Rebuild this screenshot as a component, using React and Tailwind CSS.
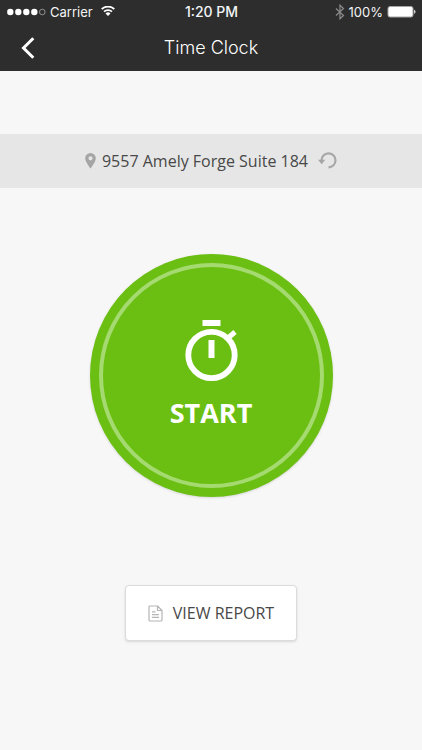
import React from 'react';

function StatusBar() {
  return (
    <div className="grid h-6 grid-cols-[1fr_auto_1fr] items-center pl-[7px] pr-[6px] text-[13px] leading-6 text-gray-100">
      <div className="flex items-center">
        <svg width="39" height="8" viewBox="0 0 39 8" aria-hidden="true">
          <g fill="#fff">
            <circle cx="3.300" cy="4" r="3.200" />
            <circle cx="11.300" cy="4" r="3.200" />
            <circle cx="19.300" cy="4" r="3.200" />
            <circle cx="27.300" cy="4" r="3.200" />
          </g>
          <circle cx="35.300" cy="4" r="2.800" fill="none" stroke="#aaa" strokeWidth="0.8" />
        </svg>
        <span className="ml-1">Carrier</span>
        <svg className="ml-2 shrink-0" width="14" height="12" viewBox="0 0 14 12" fill="none" stroke="#fff" strokeWidth="1.700" aria-hidden="true">
          <path d="M0.7 3.100a9 9 0 0 1 12.600 0M3 5.700a5.800 5.800 0 0 1 8 0" />
          <path d="M7 10 4.500 7.500a3.500 3.500 0 0 1 5 0z" fill="#fff" stroke="none" />
        </svg>
      </div>
      <div className="text-center text-sm font-medium leading-6">1:20 PM</div>
      <div className="flex items-center justify-end">
        <svg width="10" height="16" viewBox="0 0 10 16" fill="none" stroke="#8c8c8c" strokeWidth="1.200" aria-hidden="true">
          <path d="M1 4.500 8.500 11.500 5 14.800V1.200L8.500 4.500 1 11.500" />
        </svg>
        <span className="ml-1">100%</span>
        <svg className="ml-1" width="29" height="12" viewBox="0 0 29 12" aria-hidden="true">
          <rect x="1" y="0.5" width="25" height="10.500" rx="2" fill="#fff" stroke="#a5a5a5" />
          <path d="M27 3.800c2 .4 2 3.600 0 4z" fill="#ccc" />
        </svg>
      </div>
    </div>
  );
}

function Header() {
  return (
    <header className="bg-[#2d2d2d] font-['Inter','Liberation_Sans',sans-serif]">
      <StatusBar />
      <div className="grid h-[47px] grid-cols-[56px_1fr_56px] items-center">
        <button type="button" aria-label="Back" className="flex h-full items-center justify-center">
          <svg width="14" height="22" viewBox="0 0 14 22" fill="none" stroke="#fff" strokeWidth="3" aria-hidden="true">
            <path d="M12.300 1.200 2.500 11l9.800 9.800" />
          </svg>
        </button>
        <h1 className="text-center text-lg font-light text-white">Time Clock</h1>
      </div>
    </header>
  );
}

function LocationBar() {
  return (
    <div className="mt-[63px] flex h-[54px] items-center justify-center bg-[#e6e6e6]">
      <svg width="11" height="16" viewBox="0 0 11 16" fill="#a5a5a5" aria-hidden="true">
        <path fillRule="evenodd" d="M5.500 0A5.300 5.300 0 0 0 0.200 5.300C0.200 9 5.500 15.500 5.500 15.500S10.800 9 10.800 5.300A5.300 5.300 0 0 0 5.500 0zm0 3.300a2 2 0 1 1 0 4.100 2 2 0 0 1 0-4.100z" />
      </svg>
      <span className="ml-[6px] text-base">9557 Amely Forge Suite 184</span>
      <button type="button" aria-label="Refresh location" className="ml-[10px]">
        <svg width="19" height="18" viewBox="0 0 19 18" aria-hidden="true">
          <path d="M3.500 8.500A7 7 0 1 1 10.500 15.300" fill="none" stroke="#a8a8a8" strokeWidth="2.200" />
          <path d="M0 7.800h7.200L3.700 12.300z" fill="#a5a5a5" />
        </svg>
      </button>
    </div>
  );
}

function StartButton() {
  return (
    <button type="button" className="mt-[66px] size-[243px] rounded-full bg-[#6bbf13] p-[9px] shadow-sm">
      <span className="flex size-full flex-col items-center rounded-full border-4 border-[#a5da70] pt-[53px] text-white">
        <svg width="53" height="62" viewBox="0 0 53 62" aria-hidden="true">
          <path d="M17.500 0h18v6h-18zM23.500 20h6v18h-6z" fill="#fff" />
          <circle cx="26.500" cy="35" r="23.200" fill="none" stroke="#fff" strokeWidth="5.800" />
          <path d="m43 18 7-6" stroke="#fff" strokeWidth="5" />
        </svg>
        <span className="mt-[11px] text-[27px] font-bold leading-10">START</span>
      </span>
    </button>
  );
}

function ReportButton() {
  return (
    <button type="button" className="mt-[88px] flex h-14 items-center rounded border border-[#dcdcdc] bg-white px-[22px] shadow-sm">
      <svg width="15" height="17" viewBox="0 0 15 17" fill="none" stroke="#b5b5b5" strokeWidth="1.200" strokeLinejoin="round" aria-hidden="true">
        <path d="M2 1h7.500L14 5.500V15a1 1 0 0 1-1 1H2a1 1 0 0 1-1-1V2a1 1 0 0 1 1-1zM9.500 1v4.500H14M4 6.800h3.500M4 9.600h7M4 12.400h7" />
      </svg>
      <span className="ml-[10px] text-base">VIEW REPORT</span>
    </button>
  );
}

export default function App() {
  return (
    <div className="min-h-screen bg-[#f7f7f7] font-['Open_Sans','Noto_Sans',sans-serif] text-[#484848]">
      <Header />
      <main>
        <LocationBar />
        <div className="flex flex-col items-center pb-8">
          <StartButton />
          <ReportButton />
        </div>
      </main>
    </div>
  );
}
